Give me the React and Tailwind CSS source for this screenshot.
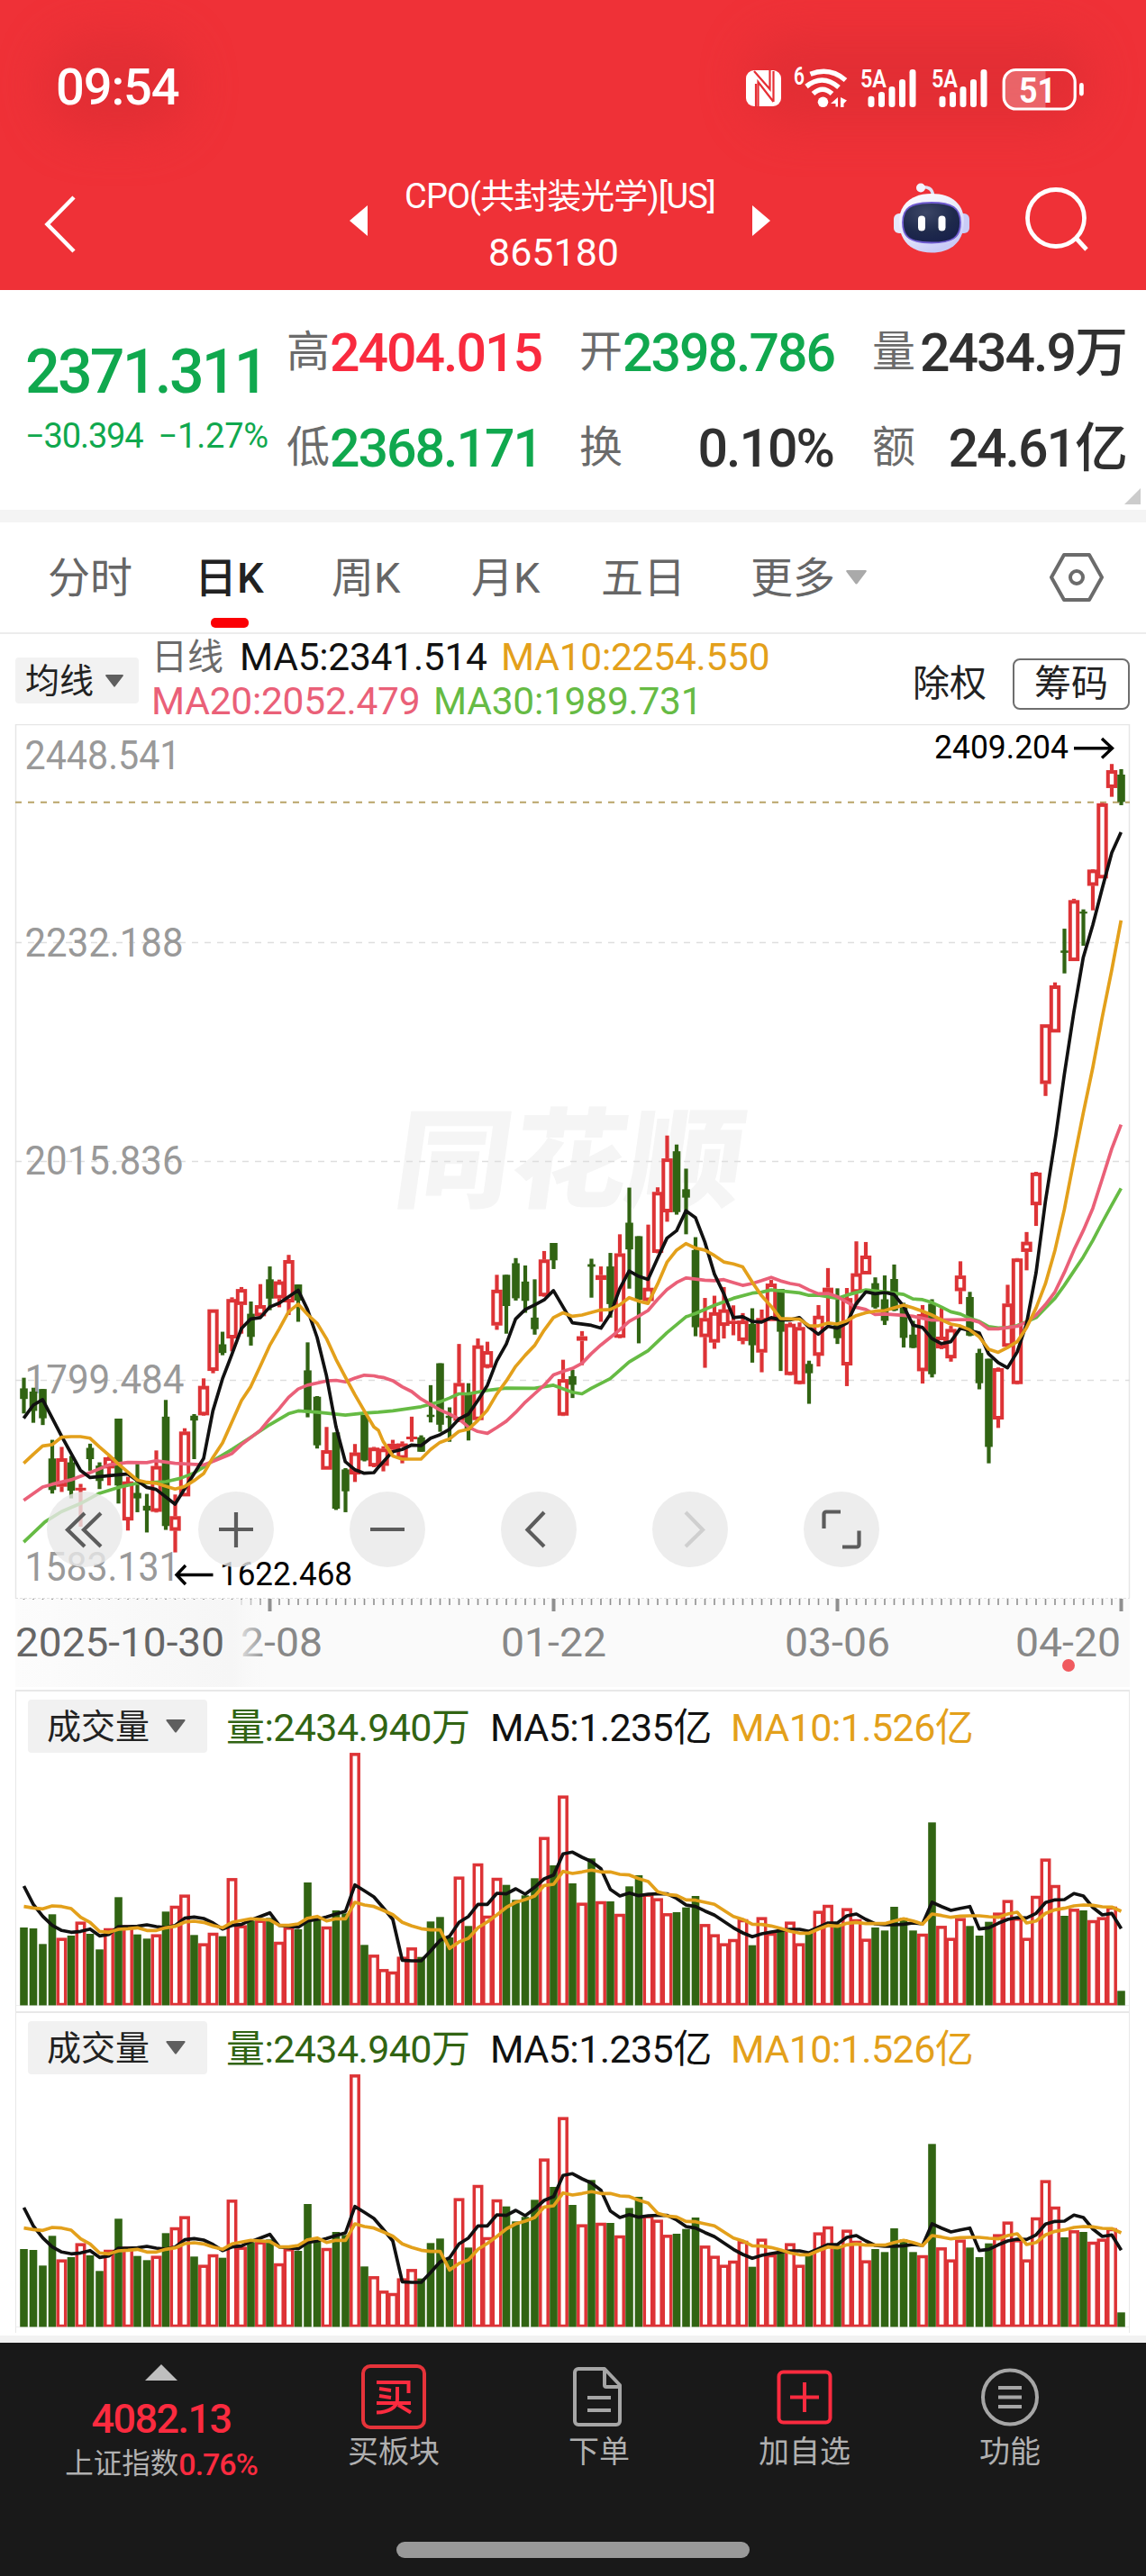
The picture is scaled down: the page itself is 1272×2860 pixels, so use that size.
const FONT = 'font-[Roboto,"Noto_Sans_CJK_SC",sans-serif]'

const RED = '#dd3336'
const GREEN = '#316413'
const BLACK = '#111111'
const ORANGE = '#e3a01b'
const PINK = '#ea6078'
const LIME = '#66bb44'

const STEP = 10.5
const FIRST_X = 26.5

// [dir, high, bodyTop, bodyBottom, low]
const CANDLES_A = [
  ['g', 587, 620, 653, 698], ['g', 618, 630, 690, 727], ['g', 622, 622, 713, 734], ['g', 780, 838, 936, 947],
  ['r', 802, 838, 925, 942], ['g', 830, 850, 938, 962], ['r', 917, 929, 936, 1050], ['g', 792, 805, 840, 876],
  ['g', 850, 860, 908, 933], ['r', 832, 835, 868, 922], ['g', 714, 714, 922, 978], ['r', 895, 910, 1030, 1062],
  ['g', 855, 945, 962, 1005], ['g', 948, 985, 1000, 1068], ['r', 813, 862, 1003, 1006], ['g', 656, 708, 1048, 1060],
  ['r', 950, 1018, 1062, 1130], ['r', 744, 755, 955, 955], ['g', 700, 705, 720, 840], ['r', 589, 613, 703, 705],
  ['r', 375, 375, 565, 573], ['g', 444, 483, 510, 517], ['r', 337, 343, 464, 505], ['r', 305, 312, 360, 450],
  ['g', 350, 388, 460, 487], ['r', 296, 362, 395, 398], ['g', 241, 281, 341, 377], ['r', 282, 288, 340, 368],
  ['r', 205, 222, 352, 392], ['g', 297, 297, 347, 413], ['g', 477, 564, 690, 710], ['g', 644, 646, 797, 807],
  ['r', 740, 813, 872, 872], ['g', 757, 757, 994, 998], ['g', 868, 872, 940, 1005], ['r', 793, 820, 887, 911],
  ['g', 703, 703, 844, 847], ['r', 802, 805, 862, 865],
]

const CANDLES_B = [
  ['r', 1080, 1088, 1140, 1158], ['r', 1060, 1072, 1090, 1100], ['r', 1065, 1072, 1118, 1133], ['r', 988, 1050, 1057, 1066],
  ['g', 1046, 1052, 1097, 1097], ['g', 890, 982, 989, 1006], ['g', 822, 822, 1013, 1035], ['g', 959, 985, 992, 1066],
  ['r', 762, 884, 1000, 1005], ['g', 884, 915, 1030, 1062], ['r', 745, 767, 998, 1000], ['r', 755, 785, 835, 838],
  ['r', 547, 594, 704, 718], ['g', 547, 547, 644, 730], ['g', 495, 511, 620, 627], ['g', 518, 568, 628, 665],
  ['g', 561, 680, 716, 733], ['r', 473, 500, 613, 615], ['g', 448, 448, 502, 529], ['r', 811, 872, 984, 986],
  ['g', 842, 862, 889, 930], ['r', 722, 738, 752, 828], ['g', 497, 514, 522, 618], ['r', 521, 548, 563, 693],
  ['g', 479, 521, 638, 680], ['r', 421, 481, 742, 744], ['g', 276, 385, 468, 590], ['g', 427, 427, 625, 760],
  ['r', 391, 588, 628, 635], ['r', 275, 290, 478, 480], ['r', 114, 186, 352, 382], ['g', 142, 163, 352, 360],
  ['g', 217, 281, 307, 421], ['g', 430, 470, 710, 738], ['r', 619, 682, 740, 836], ['r', 612, 664, 757, 777],
  ['r', 585, 655, 705, 745], ['r', 642, 690, 700, 735], ['r', 666, 690, 752, 763], ['g', 651, 700, 766, 820],
  ['r', 655, 682, 788, 850], ['r', 563, 575, 690, 690], ['g', 591, 591, 724, 846], ['r', 695, 700, 858, 860],
  ['r', 695, 710, 886, 888], ['g', 814, 824, 853, 948], ['r', 641, 675, 798, 832], ['r', 526, 587, 605, 700],
  ['g', 589, 695, 744, 762], ['r', 588, 620, 828, 893], ['r', 443, 543, 602, 640], ['r', 445, 488, 545, 545],
  ['g', 555, 573, 648, 652], ['g', 549, 623, 690, 703], ['g', 515, 560, 658, 660], ['g', 634, 640, 743, 773],
  ['g', 690, 733, 774, 775], ['r', 641, 670, 846, 885], ['g', 623, 637, 856, 866], ['r', 650, 740, 775, 778],
  ['r', 706, 716, 806, 817], ['r', 505, 550, 597, 638], ['g', 600, 616, 736, 738], ['g', 777, 790, 884, 903],
  ['g', 808, 808, 1082, 1133], ['r', 835, 838, 996, 1023], ['r', 578, 637, 770, 772], ['r', 495, 497, 886, 888],
  ['r', 414, 445, 475, 533], ['r', 227, 230, 330, 395], ['r', -231, -231, -47, -9], ['r', -362, -352, -207, -207],
  ['g', -529, -461, -454, -390], ['r', -622, -617, -429, -429], ['g', -589, -582, -576, -476], ['r', -714, -712, -663, -586],
  ['r', -920, -918, -686, -686], ['r', -1041, -1021, -967, -939], ['g', -1025, -1008, -923, -913],
]

const toY = (v) => 1220 + v / 2.8

const CANDLES = [
  ...CANDLES_A.map(([d, ...v]) => [d, ...v.map((n) => toY(n + 280))]),
  ...CANDLES_B.map(([d, ...v]) => [d, ...v.map(toY)]),
]

// three stretches of the same polyline, left to right
const MA_LINES = [
  {
    color: LIME,
    parts: [
      '79,1098 150,1035 205,1003 268,978 331,946 394,928 457,915 520,912 552,910 600,900 646,883 678,865 709,845 772,810 835,772 898,733 961,699 993,690 1056,694 1150,703 1213,697',
      '0,974 48,970 142,957 205,942 237,930 268,917 300,917 363,906 426,899 520,900 583,890 646,912 678,917 709,900 772,870 835,818 898,783 961,727 1024,678 1056,667 1119,642 1182,620 1245,604',
      '10,601 42,594 136,603 168,611 199,610 262,620 294,610 357,594 420,600 483,608 514,622 546,624 577,633 609,647 640,662 672,669 703,682 735,692 766,708 798,712 829,711 861,705 892,693 924,680 955,650 987,620 1018,580 1050,535 1081,492 1113,440 1144,385 1176,330 1207,278',
    ],
  },
  {
    color: PINK,
    parts: [
      '79,968 142,927 174,918 237,904 300,882 363,858 426,850 489,851 520,845 583,853 678,858 709,847 772,823 804,795 835,773 867,750 898,715 930,683 961,648 993,622 1024,610 1087,597 1119,595 1150,600 1182,588 1213,579 1245,581',
      '0,864 16,866 48,876 79,895 111,910 142,933 174,950 205,967 237,980 268,995 300,1020 331,1034 363,1040 394,1022 426,1002 457,975 489,943 520,917 552,890 583,858 615,847 646,838 678,822 709,792 741,765 772,742 804,718 835,692 867,675 898,658 930,623 961,593 993,571 1024,557 1087,564 1119,565 1150,562 1182,571 1213,580 1245,574',
      '10,565 42,555 73,566 105,574 136,579 168,594 199,606 231,605 262,615 294,632 325,648 357,655 388,670 420,669 483,673 514,676 546,682 577,688 703,686 735,694 766,715 798,715 829,711 861,707 892,694 924,672 955,640 987,600 1018,540 1050,470 1081,410 1113,340 1144,250 1176,155 1207,80',
    ],
  },
  {
    color: BLACK,
    parts: [
      '79,713 111,672 142,655 205,768 268,875 300,897 426,886 489,928 520,934 583,980 678,838 709,690 741,590 772,515 804,434 835,404 867,400 898,367 930,355 993,315 1024,375 1056,462 1087,580 1119,740 1150,848 1182,873 1213,884 1245,882',
      '0,1145 42,1102 48,1097 79,1090 111,1076 142,1078 174,1055 205,1044 237,1027 268,995 300,980 331,938 363,890 394,815 426,762 457,684 489,655 520,641 552,625 583,596 646,696 709,704 741,713 772,670 804,590 835,535 867,552 898,561 930,495 961,433 993,410 1024,348 1056,370 1087,445 1119,545 1150,605 1182,680 1213,677 1245,692',
      '10,694 42,680 73,687 105,687 136,680 168,710 199,732 231,707 262,713 294,697 325,637 357,600 388,606 420,602 451,608 483,645 514,703 546,711 577,745 609,761 640,755 672,713 703,720 735,728 766,793 798,820 829,836 861,787 892,700 924,540 955,320 990,112 1018,-75 1050,-271 1081,-439 1113,-541 1144,-653 1176,-765 1207,-829',
    ],
  },
  {
    color: ORANGE,
    parts: [
      '79,853 111,825 142,799 174,795 205,772 237,770 268,770 300,775 331,802 363,828 394,855 426,880 457,905 489,912 520,915 583,933 615,925 646,907 678,885 709,835 741,790 772,725 804,658 835,615 867,550 898,487 930,435 961,382 993,358 1024,390 1056,418 1087,465 1119,530 1150,585 1182,640 1213,690 1245,740',
      '0,1030 16,1065 48,1110 79,1120 142,1120 174,1090 205,1068 237,1057 268,1034 300,1027 331,1000 363,967 394,918 426,877 457,832 489,797 520,767 552,719 583,680 615,665 646,676 678,672 741,656 772,655 804,640 835,618 867,629 898,636 930,575 961,508 993,470 1024,450 1056,464 1087,470 1119,487 1150,507 1182,513 1213,522 1245,570',
      '10,612 42,645 73,683 136,685 168,705 199,706 231,697 262,700 294,690 325,674 357,665 388,660 420,658 451,650 483,641 514,650 546,660 577,672 609,687 640,700 672,706 703,718 735,740 766,778 798,788 829,773 861,755 892,712 924,650 955,575 987,470 1018,345 1050,190 1081,45 1113,-98 1144,-252 1176,-401 1207,-555',
    ],
  },
]

const PART_OFFSET = [[0, 280], [1260, 0], [2526, 0]]

const linePoints = (parts) =>
  parts
    .flatMap((part, k) =>
      part.split(' ').map((p) => {
        const [x, y] = p.split(',').map(Number)
        return `${((x + PART_OFFSET[k][0]) / 3).toFixed(1)},${toY(y + PART_OFFSET[k][1]).toFixed(1)}`
      }),
    )
    .join(' ')

const VOLUME = [
  1137, 1140, 1192, 1093, 1172, 1164, 1118, 1158, 1210, 1140, 1036, 1130, 1160, 1174, 1160, 1084, 1065, 1028, 1162, 1190,
  1155, 1166, 973, 1130, 1115, 1112, 1105, 1185, 1135, 1143, 987, 1110, 1134, 1080, 1090, 556, 1195, 1228, 1276, 1284,
  1235, 1204, 1235, 1117, 1102, 1170, 968, 1132, 924, 1098, 972, 995, 1045, 1030, 973, 836, 930, 698, 990, 1055,
  907, 1050, 1050, 1092, 1000, 963, 1025, 1040, 1090, 1086, 1070, 1032, 1126, 1160, 1190, 1176, 1110, 1196, 1103, 1155,
  1145, 1118, 1190, 1150, 1082, 1062, 1125, 1073, 1110, 1175, 1137, 1147, 1068, 1105, 1147, 1158, 787, 1132, 1172, 1106,
  1132, 1164, 1118, 1088, 1046, 1105, 1172, 1032, 908, 996, 1098, 1075, 1080, 1113, 1103, 1068, 1348,
]

const VOLUME_MA5 = [
  999, 1060, 1100, 1130, 1147, 1153, 1150, 1142, 1165, 1160, 1134, 1134, 1133, 1128, 1134, 1137, 1130, 1106, 1102, 1107,
  1122, 1142, 1130, 1127, 1112, 1100, 1088, 1130, 1133, 1136, 1115, 1110, 1102, 1092, 1083, 995, 1015, 1035, 1072, 1110,
  1246, 1248, 1248, 1215, 1180, 1166, 1120, 1100, 1060, 1060, 1023, 1025, 1008, 1026, 1003, 975, 962, 892, 886, 903,
  917, 941, 1010, 1032, 1022, 1031, 1026, 1025, 1025, 1040, 1062, 1067, 1082, 1096, 1117, 1138, 1155, 1168, 1158, 1152,
  1147, 1143, 1143, 1150, 1136, 1122, 1122, 1098, 1092, 1110, 1125, 1128, 1128, 1126, 1122, 1125, 1053, 1067, 1080, 1073,
  1067, 1142, 1138, 1123, 1110, 1104, 1105, 1090, 1054, 1045, 1044, 1024, 1032, 1070, 1095, 1090, 1141,
]

const VOLUME_MA10 = [
  1067, 1072, 1075, 1065, 1067, 1074, 1103, 1120, 1150, 1153, 1143, 1141, 1138, 1147, 1147, 1138, 1133, 1119, 1116, 1120,
  1130, 1138, 1120, 1114, 1108, 1110, 1112, 1130, 1130, 1125, 1106, 1100, 1115, 1108, 1108, 1053, 1062, 1067, 1080, 1094,
  1120, 1132, 1141, 1145, 1145, 1207, 1185, 1173, 1138, 1118, 1095, 1070, 1053, 1044, 1032, 997, 993, 950, 957, 952,
  946, 952, 952, 960, 962, 974, 984, 1018, 1027, 1030, 1045, 1046, 1053, 1060, 1080, 1100, 1110, 1126, 1127, 1132,
  1140, 1150, 1156, 1156, 1142, 1130, 1133, 1123, 1120, 1124, 1124, 1124, 1115, 1108, 1115, 1126, 1092, 1097, 1103, 1099,
  1098, 1098, 1101, 1103, 1092, 1086, 1122, 1115, 1090, 1078, 1073, 1065, 1062, 1063, 1068, 1069, 1083,
]

const xAt = (i) => FIRST_X + i * STEP
const volY = (v) => 1760 + v / 3
const volPoints = (list) => list.map((v, i) => `${xAt(i)},${volY(v).toFixed(1)}`).join(' ')

function Caret({ className }) {
  return (
    <svg viewBox="0 0 22 15" className={className} fill="currentColor" aria-hidden="true">
      <path d="M1.5 0h19a1 1 0 0 1 .9 1.6L12 14a1.3 1.3 0 0 1-2 0L.6 1.6A1 1 0 0 1 1.5 0z" />
    </svg>
  )
}

function SignalBars({ x }) {
  const tops = [106.7, 102, 96, 88, 77]
  return (
    <g transform={`translate(${x} 0)`}>
      <text x="0" y="97" fontSize="27" fontWeight="600" textLength="29" lengthAdjust="spacingAndGlyphs">5A</text>
      {tops.map((t, i) => (
        <rect key={t} x={8.5 + i * 11.5} y={t} width="7" height={119 - t} rx="3.2" />
      ))}
    </g>
  )
}

function StatusIcons() {
  return (
    <svg viewBox="824 66 384 62" className="h-[62px] w-[384px]" fill="#fff" aria-hidden="true">
      {/* NFC */}
      <rect x="829" y="78" width="39" height="40" rx="9" />
      <g fill="none" stroke="#e62e34" strokeWidth="2.2">
        <path d="M840 119V93M838 79l17.5 20V77M842.5 118V91l17 22M859.5 113V79" />
      </g>
      {/* Wi-Fi */}
      <text x="882" y="94" fontSize="27" fontWeight="600" textLength="12" lengthAdjust="spacingAndGlyphs">6</text>
      <g fill="none" stroke="#fff" strokeWidth="5.5">
        <path d="M900.5 82.3Q922 74 939.5 89" />
        <path d="M896 96Q914 81.5 932 97" />
        <path d="M903.5 104Q914 94.5 924.5 104" />
      </g>
      <circle cx="914.5" cy="113.3" r="5.8" />
      <path d="M931 108v10.5h-2.5V115H923zM934 108l7 3.5-3.5 3.5v4H934z" />
      <SignalBars x={956} />
      <SignalBars x={1035} />
      {/* battery */}
      <path d="M1129 77.5h32.5v43H1129a13.5 13.5 0 0 1-13.5-13.5V91a13.5 13.5 0 0 1 13.5-13.5z" fillOpacity=".26" />
      <rect x="1115.2" y="77.5" width="79" height="43.5" rx="13.5" fill="none" stroke="#fff" strokeWidth="3.2" />
      <rect x="1199" y="92" width="4.8" height="14.5" rx="2.4" />
      <text x="1132" y="113.5" fontSize="38" fontWeight="700" textLength="41" lengthAdjust="spacingAndGlyphs">51</text>
    </svg>
  )
}

function Robot({ className }) {
  return (
    <svg viewBox="0 0 84 78" className={className} aria-hidden="true">
      <defs>
        <linearGradient id="shell" x1="0" y1="0" x2="0.5" y2="1">
          <stop offset="0" stopColor="#ffffff" />
          <stop offset=".55" stopColor="#e9eafb" />
          <stop offset="1" stopColor="#c9cbf7" />
        </linearGradient>
        <radialGradient id="visor" cx=".4" cy=".25" r=".8">
          <stop offset="0" stopColor="#3c4666" />
          <stop offset=".6" stopColor="#1f2a4c" />
          <stop offset="1" stopColor="#17204a" />
        </radialGradient>
      </defs>
      <path d="M31 5c6-1 12 1 12.5 9" fill="none" stroke="#dfe2f5" strokeWidth="3.5" />
      <circle cx="30" cy="5.5" r="5" fill="#f3f4ff" />
      <rect x="0" y="34" width="14" height="22" rx="6" fill="#e6e7fb" />
      <rect x="70" y="34" width="14" height="22" rx="6" fill="#c9ccf6" />
      <path d="M42 12c24 0 36 13 36 31 0 20-12 34.5-36 34.5S6 63 6 43c0-18 12-31 36-31z" fill="url(#shell)" />
      <path d="M42 22c23 0 32 6 32 22 0 17-9 22.5-32 22.5S10 61 10 44c0-16 9-22 32-22z" fill="url(#visor)" stroke="#6f5bd0" strokeWidth="1.8" />
      <rect x="27" y="36.5" width="8" height="17" rx="4" fill="#fff" />
      <rect x="49.5" y="36.5" width="8" height="17" rx="4" fill="#fff" />
    </svg>
  )
}

function Header() {
  return (
    <header className="relative h-[322px] overflow-hidden bg-[#ef3137] text-white">
      <div className="absolute left-[50px] top-[40px] h-[110px] w-[160px] rounded-full bg-[#e22e34] blur-xl" />
      <div className="absolute left-[830px] top-[40px] h-[100px] w-[380px] rounded-full bg-[#e22e34] blur-xl" />

      <div className="relative flex h-[176px] items-center justify-between pl-[62px] pr-[65px] pt-[18px]">
        <span className="text-[56px] font-medium leading-none tracking-[-0.02em]">09:54</span>
        <StatusIcons />
      </div>

      <div className="relative flex h-[146px] items-center">
        <svg viewBox="0 0 36 64" className="ml-[48px] h-[64px] w-[36px]" fill="none" stroke="#fff" strokeWidth="4.5" aria-hidden="true">
          <path d="M34 2 4.5 32 34 62" />
        </svg>
        <svg viewBox="0 0 20 34" className="mb-[8px] ml-[304px] h-[34px] w-[20px]" fill="#fff" aria-hidden="true">
          <path d="M20 0v34L0 17z" />
        </svg>
        <div className="flex w-[427px] flex-col items-center gap-[20px]">
          <span className="whitespace-nowrap text-[38px] leading-[42px] tracking-[-0.025em]">CPO(共封装光学)[US]</span>
          <span className="mr-[14px] text-[43px] leading-[42px]">865180</span>
        </div>
        <svg viewBox="0 0 20 34" className="mb-[8px] h-[34px] w-[20px]" fill="#fff" aria-hidden="true">
          <path d="M0 0v34l20-17z" />
        </svg>
        <Robot className="mb-[14px] ml-[137px] h-[78px] w-[84px]" />
        <svg viewBox="0 0 72 72" className="mb-[10px] ml-[61px] h-[72px] w-[72px]" fill="none" stroke="#fff" strokeWidth="4.8" aria-hidden="true">
          <circle cx="35" cy="34" r="31.5" />
          <path d="M57 56l12 13" />
        </svg>
      </div>
    </header>
  )
}

function Stat({ label, value, color }) {
  return (
    <div className="flex h-[106px] items-center justify-between whitespace-nowrap leading-none">
      <span className="text-[48px] text-[#6b6b6b]">{label}</span>
      <span className={`text-[59px] font-medium tracking-[-0.034em] ${color}`}>{value}</span>
    </div>
  )
}

function Quote() {
  return (
    <section className="relative flex h-[244px] pt-[16px]">
      <div className="w-[318px] shrink-0 pl-[28px] text-[#10a84e]">
        <p className="mt-[39px] whitespace-nowrap text-[68px] font-medium leading-[72px] tracking-[-0.04em]">2371.311</p>
        <p className="mt-[15px] flex justify-between whitespace-nowrap pr-[20px] text-[38px] leading-[40px]">
          <span className="tracking-[-0.03em]">−30.394</span>
          <span className="tracking-[-0.005em]">−1.27%</span>
        </p>
      </div>
      <div className="grid w-[932px] grid-cols-3 content-start gap-x-[43px]">
        <Stat label="高" value="2404.015" color="text-[#f92a3e]" />
        <Stat label="开" value="2398.786" color="text-[#10a84e]" />
        <Stat label="量" value="2434.9万" color="text-[#303030]" />
        <Stat label="低" value="2368.171" color="text-[#10a84e]" />
        <Stat label="换" value="0.10%" color="text-[#303030]" />
        <Stat label="额" value="24.61亿" color="text-[#303030]" />
      </div>
      <svg viewBox="0 0 18 18" className="absolute bottom-[6px] right-[6px] size-[18px]" fill="#cccccc" aria-hidden="true">
        <path d="M18 0v18H0z" />
      </svg>
    </section>
  )
}

function Tabs() {
  return (
    <nav className="flex h-[124px] items-center border-b-2 border-[#ececec] pl-[53px] text-[47px] leading-none text-[#666666]">
      <span className="w-[163px]">分时</span>
      <span className="relative w-[152px] font-medium text-[#222222]">
        日K
        <span className="absolute left-[18px] top-[68px] h-[11px] w-[42px] rounded-[5px] bg-[#fb0005]" />
      </span>
      <span className="w-[155px]">周K</span>
      <span className="w-[144px]">月K</span>
      <span className="w-[166px]">五日</span>
      <span className="flex items-center gap-[11px]">
        更多
        <Caret className="h-[16px] w-[25px] text-[#aaaaaa]" />
      </span>
      <svg viewBox="0 0 60 54" className="ml-auto mr-[47px] h-[54px] w-[60px]" fill="none" stroke="#6b6b6b" strokeWidth="4" strokeLinejoin="round" aria-hidden="true">
        <path d="M16 2h28l14 25-14 25H16L2 27z" />
        <circle cx="30" cy="27" r="7" />
      </svg>
    </nav>
  )
}

function MaBar() {
  return (
    <div className="flex h-[100px] items-start whitespace-nowrap leading-none">
      <button className="ml-[17px] mt-[26px] flex h-[51px] w-[137px] items-center gap-[12px] rounded-[4px] bg-[#f2f2f2] pl-[11px] text-[38px] text-[#222222]">
        均线
        <Caret className="h-[14px] w-[22px] text-[#5f5f5f]" />
      </button>
      <div className="ml-[14px] mt-[2px] w-[802px] text-[42.5px] tracking-[-0.006em]">
        <p className="flex h-[48px] items-center">
          <span className="w-[98px] text-[40px] tracking-normal text-[#6b6b6b]">日线</span>
          <span className="w-[290px] text-[#111111]">MA5:2341.514</span>
          <span className="text-[#e3a01b]">MA10:2254.550</span>
        </p>
        <p className="flex h-[50px] items-center">
          <span className="w-[313px] text-[#ea6078]">MA20:2052.479</span>
          <span className="text-[#66bb44]">MA30:1989.731</span>
        </p>
      </div>
      <span className="ml-[43px] mt-[35px] text-[41px] text-[#222222]">除权</span>
      <button className="ml-[29px] mt-[27px] flex h-[57px] w-[130px] items-center justify-center rounded-[8px] border-2 border-[#6e6e6e] text-[41px] text-[#222222]">
        筹码
      </button>
    </div>
  )
}

function Candle({ i, data }) {
  const [dir, high, top, bottom, low] = data
  const x = xAt(i)
  if (dir === 'g') {
    return (
      <g fill={GREEN}>
        <rect x={x - 2.1} y={high} width="4.2" height={low - high} />
        <rect x={x - 4.3} y={top} width="8.6" height={bottom - top} />
      </g>
    )
  }
  const h = bottom - top
  return (
    <g fill={RED}>
      <rect x={x - 2.1} y={high} width="4.2" height={Math.max(0, top - high)} />
      <rect x={x - 2.1} y={bottom} width="4.2" height={Math.max(0, low - bottom)} />
      {h < 8
        ? <rect x={x - 6} y={top} width="12" height={Math.max(h, 3)} />
        : <rect x={x - 4.2} y={top + 1.7} width="8.4" height={h - 3.4} fill="#fff" stroke={RED} strokeWidth="4" />}
    </g>
  )
}

const PRICE_LABELS = [
  ['2448.541', 854, 173],
  ['2232.188', 1061.5, 176],
  ['2015.836', 1304, 176],
  ['1799.484', 1547, 177],
  ['1583.131', 1754.5, 172],
]

function PriceChart() {
  return (
    <svg viewBox="0 804 1272 1072" className="block h-[1072px] w-[1272px]">
      <defs>
        <linearGradient id="fade" x1="0" x2="1">
          <stop offset="0" stopColor="#fcfcfc" />
          <stop offset=".86" stopColor="#f6f6f6" />
          <stop offset="1" stopColor="#f9f9f9" stopOpacity="0" />
        </linearGradient>
      </defs>

      <text transform="translate(434 1331) skewX(-8)" fontSize="120" fontWeight="900" fontFamily="Noto Sans CJK SC" fill="#f5f5f5" textLength="386" lengthAdjust="spacingAndGlyphs">同花顺</text>

      <path d="M17.5 1774V804.5H1253.5V1774" fill="none" stroke="#e6e6e6" strokeWidth="1.5" />
      <g stroke="#dedede" strokeWidth="1.3" strokeDasharray="7 7">
        <path d="M17 1046.5H1254M17 1289.5H1254M17 1532.5H1254" />
      </g>
      <path d="M17 890.7H1254" stroke="#b9a468" strokeWidth="2" strokeDasharray="7 7" />

      <g fontSize="43.5" fill="#999999">
        {PRICE_LABELS.map(([t, y, w]) => (
          <text key={t} x="27.5" y={y} textLength={w} lengthAdjust="spacingAndGlyphs">{t}</text>
        ))}
      </g>

      {CANDLES.map((c, i) => <Candle key={i} i={i} data={c} />)}
      {MA_LINES.map((l) => (
        <polyline key={l.color} points={linePoints(l.parts)} fill="none" stroke={l.color} strokeWidth="3.7" strokeLinejoin="round" />
      ))}

      <g fontSize="36" fill="#000">
        <text x="1037" y="842" textLength="149" lengthAdjust="spacingAndGlyphs">2409.204</text>
        <text x="244" y="1759.5" textLength="147" lengthAdjust="spacingAndGlyphs">1622.468</text>
      </g>
      <g fill="none" stroke="#000" strokeWidth="3.4">
        <path d="M1192 830.7h42M1223 820l11.5 10.7L1223 841.5" />
        <path d="M236.5 1748.5H197M206 1738l-10 10.5L206 1759" />
      </g>

      {/* date strip */}
      <rect x="17" y="1775" width="1237" height="98" fill="#fafafa" />
      <path d="M17 1774.5H1254" stroke="#e2e2e2" strokeWidth="1.2" strokeDasharray="3 2" />
      <g fill="#8f8f8f">
        {CANDLES.map((_, i) =>
          (i - 26) % 30 === 0
            ? <rect key={i} x={xAt(i) - 2} y="1775" width="4" height="14" />
            : <rect key={i} x={xAt(i) - 0.8} y="1775" width="1.6" height="7" />,
        )}
      </g>
      <g fontSize="43.5" fill="#888888">
        <text x="241" y="1838.5" textLength="117" lengthAdjust="spacingAndGlyphs">12-08</text>
        <text x="556" y="1838.5" textLength="117" lengthAdjust="spacingAndGlyphs">01-22</text>
        <text x="871" y="1838.5" textLength="117" lengthAdjust="spacingAndGlyphs">03-06</text>
        <text x="1127" y="1838.5" textLength="117" lengthAdjust="spacingAndGlyphs">04-20</text>
      </g>
      <rect x="17" y="1776" width="245" height="97" fill="#f8f8f8" />
      <rect x="17" y="1776" width="280" height="97" fill="url(#fade)" />
      <text x="17" y="1838.5" fontSize="43.5" fill="#666666" textLength="232" lengthAdjust="spacingAndGlyphs">2025-10-30</text>
      <circle cx="1186" cy="1849" r="7" fill="#f05a5f" />
    </svg>
  )
}

function RoundButton({ children, muted }) {
  return (
    <button className={`flex size-[84px] items-center justify-center rounded-full bg-[#e8e8e8]/80 ${muted ? 'text-[#cfcfcf]' : 'text-[#5c5c5c]'}`}>
      <svg viewBox="0 0 84 84" className="size-[84px]" fill="none" stroke="currentColor" strokeWidth="4.2" aria-hidden="true">
        {children}
      </svg>
    </button>
  )
}

function ChartControls() {
  return (
    <div className="absolute left-[52px] top-[852px] flex gap-[84px]">
      <RoundButton><path d="M42 24 23 42.5 42 61M60 24 41 42.5 60 61" /></RoundButton>
      <RoundButton><path d="M23 42h38M42 23v39" /></RoundButton>
      <RoundButton><path d="M23 42h38" /></RoundButton>
      <RoundButton><path d="M48 23 29.5 42.5 48 61" /></RoundButton>
      <RoundButton muted><path d="M37 23l19 19.5L37 61" /></RoundButton>
      <RoundButton><path d="M41 22.5H25a2.5 2.5 0 0 0-2.5 2.5v16M43 61.5h16a2.5 2.5 0 0 0 2.5-2.5V43.5" /></RoundButton>
    </div>
  )
}

function VolumePanel() {
  return (
    <section className="ml-[17px] mr-[18px] h-[357px] border-x border-t-2 border-[#e8e8e8]">
      <div className="flex h-[67px] items-start whitespace-nowrap pl-[13px] pt-[9px] text-[43px] leading-none">
        <button className="flex h-[59px] w-[199px] shrink-0 items-center gap-[18px] rounded-[4px] bg-[#f1f1f1] pl-[21px] text-[38px] text-[#222222]">
          成交量
          <Caret className="h-[15px] w-[22px] text-[#5f5f5f]" />
        </button>
        <p className="ml-[21px] mt-[10px] flex tracking-[-0.014em]">
          <span className="w-[293px] text-[#316413]">量:2434.940万</span>
          <span className="w-[267px] text-[#111111]">MA5:1.235亿</span>
          <span className="text-[#e3a01b]">MA10:1.526亿</span>
        </p>
      </div>
      <svg viewBox="18 1944 1235 282" className="relative block h-[282px] w-[1235px]">
        {VOLUME.map((v, i) => {
          const x = xAt(i)
          const y = volY(v)
          return CANDLES[i][0] === 'g'
            ? <rect key={i} x={x - 4.3} y={y} width="8.6" height={2226 - y} fill={GREEN} />
            : <rect key={i} x={x - 4.2} y={y + 1.5} width="8.4" height={2223 - y} fill="#fff" stroke={RED} strokeWidth="3.5" />
        })}
        <path d="M18 2225.5H1253" stroke="#e2e2e2" strokeOpacity=".6" />
        <polyline points={volPoints(VOLUME_MA5)} fill="none" stroke={BLACK} strokeWidth="3.7" strokeLinejoin="round" />
        <polyline points={volPoints(VOLUME_MA10)} fill="none" stroke={ORANGE} strokeWidth="3.7" strokeLinejoin="round" />
      </svg>
    </section>
  )
}

function FooterItem({ label, className, children }) {
  return (
    <div className={`flex flex-col items-center ${className}`}>
      <svg viewBox="0 0 76 76" className="mt-[22px] size-[76px]" fill="none" stroke="#a6a6a6" strokeWidth="4" strokeLinejoin="round" aria-hidden="true">
        {children}
      </svg>
      <span className="mt-[5px] whitespace-nowrap text-[34px] leading-[36px] text-[#b0b0b0]">{label}</span>
    </div>
  )
}

function Footer() {
  return (
    <footer className="flex h-[259px] flex-col bg-[#191919]">
      <div className="flex h-[221px] items-start">
        <div className="ml-[58px] flex w-[242px] flex-col items-center whitespace-nowrap">
          <svg viewBox="0 0 36 18" className="mt-[24px] h-[18px] w-[36px]" fill="#bfbfbf" aria-hidden="true">
            <path d="M18 0l18 18H0z" />
          </svg>
          <span className="mt-[19px] text-[45px] font-medium leading-[48px] tracking-[-0.035em] text-[#fb2b3f]">4082.13</span>
          <p className="mt-[8px] flex items-center leading-[36px]">
            <span className="text-[31.5px] text-[#b0b0b0]">上证指数</span>
            <span className="text-[34px] font-medium tracking-[-0.03em] text-[#fb2b3f]">0.76%</span>
          </p>
        </div>
        <FooterItem label="买板块" className="ml-[23px] w-[228px]">
          <g stroke="#e6333a">
            <rect x="4" y="4" width="68" height="68" rx="8" />
            <g stroke="#fb2b3f" strokeLinejoin="miter">
              <path d="M19 22h35.5v12M22 29l13 2M22 37l13 2M42 27v14c0 9-10 14-23 14.5M19 45h38M43 47l14 8.5" />
            </g>
          </g>
        </FooterItem>
        <FooterItem label="下单" className="w-[228px]">
          <path d="M15 7h29l17 18v40a4 4 0 0 1-4 4H15a4 4 0 0 1-4-4V11a4 4 0 0 1 4-4zM44 7v18a2 2 0 0 0 2 2h15M25 39h26M25 53h26" />
        </FooterItem>
        <FooterItem label="加自选" className="w-[228px]">
          <g stroke="#fb2b3f">
            <rect x="9.500" y="10.500" width="57" height="56" rx="5" />
            <path d="M22 38.500h32M38 22v33" />
          </g>
        </FooterItem>
        <FooterItem label="功能" className="w-[228px]">
          <circle cx="38" cy="38.5" r="30" />
          <path d="M25 28h26M25 38.5h26M25 49h26" />
        </FooterItem>
      </div>
      <div className="mx-auto h-[18px] w-[392px] rounded-full bg-[#999999]" />
    </footer>
  )
}

export default function App() {
  return (
    <div className={`${FONT} h-[2860px] w-[1272px] overflow-hidden bg-white`}>
      <Header />
      <Quote />
      <div className="h-[14px] bg-[#f4f4f4]" />
      <Tabs />
      <MaBar />
      <div className="relative">
        <PriceChart />
        <ChartControls />
      </div>
      <VolumePanel />
      <VolumePanel />
      <div className="mt-[3px] h-[8px] bg-[#f2f2f2]" />
      <Footer />
    </div>
  )
}
